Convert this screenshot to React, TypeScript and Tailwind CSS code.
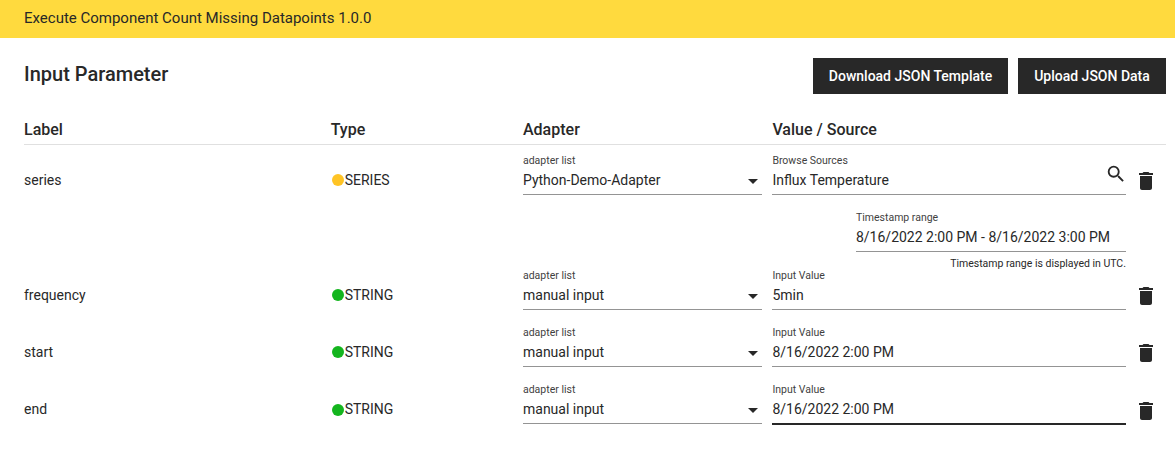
import React from "react";

type Row = {
  name: string;
  type: "SERIES" | "STRING";
  adapter: string;
  label: string;
  value: string;
  search?: boolean;
  range?: string;
  focused?: boolean;
};

const rows: Row[] = [
  {
    name: "series",
    type: "SERIES",
    adapter: "Python-Demo-Adapter",
    label: "Browse Sources",
    value: "Influx Temperature",
    search: true,
    range: "8/16/2022 2:00 PM - 8/16/2022 3:00 PM",
  },
  { name: "frequency", type: "STRING", adapter: "manual input", label: "Input Value", value: "5min" },
  { name: "start", type: "STRING", adapter: "manual input", label: "Input Value", value: "8/16/2022 2:00 PM" },
  { name: "end", type: "STRING", adapter: "manual input", label: "Input Value", value: "8/16/2022 2:00 PM", focused: true },
];

function Field({
  label,
  value,
  icon,
  focused,
}: {
  label: string;
  value: string;
  icon?: React.ReactNode;
  focused?: boolean;
}) {
  return (
    <div
      className={
        focused
          ? "flex h-[43px] justify-between border-b-2 border-[#282828]"
          : "flex h-[42px] justify-between border-b border-[#949494]"
      }
    >
      <div>
        <div className="h-[15px] text-[10.5px] leading-[15px] text-[#3f3f3f]">{label}</div>
        <div className="mt-0.5 text-sm leading-5">{value}</div>
      </div>
      {icon}
    </div>
  );
}

function Trash({ low }: { low?: boolean }) {
  return (
    <svg viewBox="0 0 24 24" className={low ? "mt-[17px] ml-2 size-6" : "mt-4 ml-2 size-6"} fill="#282828">
      <path d="M6 19c0 1.100.9 2 2 2h8c1.100 0 2-.9 2-2V7H6v12zM19 4h-3.500l-1-1h-5l-1 1H5v2h14V4z" />
    </svg>
  );
}

export default function App() {
  return (
    <div className="h-[451px] bg-white font-['Roboto',sans-serif] text-[#282828]">
      <header className="flex h-[38px] items-center bg-[#ffda3e] pb-0.5 pl-6 text-[15px] leading-5">
        Execute Component Count Missing Datapoints 1.0.0
      </header>
      <main className="pr-[9px] pl-6">
        <div className="flex items-start justify-between pt-5">
          <h1 className="text-xl leading-8 font-medium">Input Parameter</h1>
          <div className="flex gap-2.5 text-sm font-medium text-white">
            <button className="h-9 w-[195px] bg-[#282828]">Download JSON Template</button>
            <button className="h-9 w-[148px] bg-[#282828]">Upload JSON Data</button>
          </div>
        </div>
        <div className="mt-[23px] grid h-7 grid-cols-[306.7px_192.3px_249.4px_1fr] border-b border-[#e0e0e0] text-base leading-[26px] font-medium">
          <span>Label</span>
          <span>Type</span>
          <span>Adapter</span>
          <span>Value / Source</span>
        </div>
        <div className="pt-2">
          {rows.map((row) => (
            <div
              key={row.name}
              className={
                row.range
                  ? "grid h-[115px] grid-cols-[306.7px_192.3px_239px_354px_1fr] text-sm"
                  : "grid h-[57px] grid-cols-[306.7px_192.3px_239px_354px_1fr] text-sm"
              }
            >
              <div className="pt-[17px] leading-5">{row.name}</div>
              <div className="flex h-[37px] items-center pt-[17px] pl-px leading-5">
                <span
                  className={
                    row.type === "SERIES"
                      ? "mr-px size-3 rounded-full bg-[#ffc425]"
                      : row.focused
                        ? "mt-0.5 mr-px size-3 rounded-full bg-[#14b51e]"
                        : "mr-px size-3 rounded-full bg-[#14b51e]"
                  }
                />
                {row.type}
              </div>
              <Field
                label="adapter list"
                value={row.adapter}
                icon={
                  <svg viewBox="0 0 10 5" className="mt-[26px] mr-1 h-[5px] w-2.5" fill="#282828">
                    <path d="M0 0h10L5 5z" />
                  </svg>
                }
              />
              <div className="ml-[10.4px] w-[353.6px]">
                <Field
                  label={row.label}
                  value={row.value}
                  focused={row.focused}
                  icon={
                    row.search && (
                      <svg viewBox="0 0 24 24" className="mt-2.5 -mr-px size-[22px]" fill="#282828">
                        <path d="M15.500 14h-.79l-.28-.27A6.471 6.471 0 0 0 16 9.500 6.500 6.500 0 1 0 9.500 16c1.610 0 3.090-.59 4.230-1.570l.27.28v.79l5 4.990L20.490 19l-4.990-5zm-6 0C7.010 14 5 11.990 5 9.500S7.010 5 9.500 5 14 7.010 14 9.500 11.990 14 9.500 14z" />
                      </svg>
                    )
                  }
                />
                {row.range && (
                  <div className="mt-[15px] ml-[83.6px]">
                    <Field label="Timestamp range" value={row.range} />
                    <div className="mt-1 text-right text-[10.5px] leading-4">Timestamp range is displayed in UTC.</div>
                  </div>
                )}
              </div>
              <div className="pl-2.5">
                <Trash low={row.focused} />
              </div>
            </div>
          ))}
        </div>
      </main>
    </div>
  );
}
